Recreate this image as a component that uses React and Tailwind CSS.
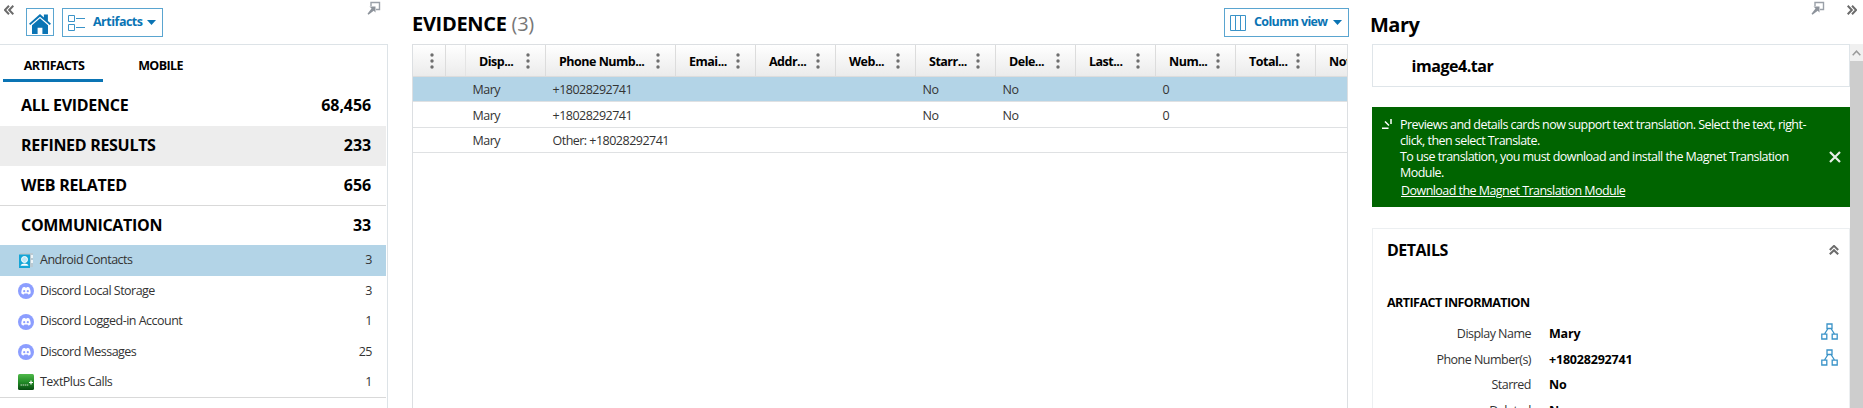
const label = "text-[12.5px] text-[#333] tracking-[-0.52px]";

function Popout() {
  return (
    <svg width="14" height="14" viewBox="0 0 14 14" fill="none">
      <path d="M4 5V1.500h8.500v7H9" stroke="#9aa0a8" strokeWidth="1.400" />
      <path d="M2.500 5.500h6v6L6.700 9.700 1.500 13.800.5 12.800 4.500 7.500z" fill="#8d939b" />
    </svg>
  );
}

function Chevrons({ className }) {
  return (
    <svg className={className} width="10" height="10" viewBox="0 0 10 10" fill="none" stroke="#6b6b6b" strokeWidth="2">
      <path d="M5 .8.9 5 5 9.2M9.3.8 5.2 5l4.1 4.2" />
    </svg>
  );
}

function Home() {
  return (
    <svg width="22" height="20" viewBox="0 0 22 20" fill="#0a74b4">
      <path d="M11 0 0 9.7l1.3 1.4L11 2.7l9.7 8.4L22 9.7l-3.1-2.8V0.6h-4v2.8z" />
      <path d="M11 4.2 3 11.2V20h5.6v-6.2h4.8V20H19v-8.8z" />
    </svg>
  );
}

function ListIcon() {
  return (
    <svg width="17" height="17" viewBox="0 0 17 17" fill="none" stroke="#3a93c8">
      <path d="M.5 1.500h6v6h-6zM.5 10.500h6v6h-6zM8 4.500h9M8 13.500h9" />
    </svg>
  );
}

function ColumnsIcon() {
  return (
    <svg width="16" height="16" viewBox="0 0 16 16" fill="none" stroke="#3a93c8">
      <path d="M.5.5h15v15H.5zM5.5 0v16M10.5 0v16" />
    </svg>
  );
}

function Caret() {
  return (
    <svg width="9" height="5" viewBox="0 0 9 5">
      <path d="M0 0h9L4.5 5z" fill="#0a74b4" />
    </svg>
  );
}

function ContactIcon() {
  return (
    <svg className="ml-px" width="15" height="15" viewBox="0 0 15 15">
      <path d="M1 0h13v14H1z" fill="#b9c9d2" />
      <path d="M12 2h2v3h-2zM12 7h2v3h-2z" fill="#eef4f7" />
      <path d="M0 1.5h11V15H0z" fill="#14a5d6" />
      <circle cx="5.5" cy="6.5" r="3" fill="#bfe6f4" stroke="#fff" />
      <path d="M1.500 12.700c1-2.800 7-2.800 8 0z" fill="#fff" />
    </svg>
  );
}

function DiscordIcon() {
  return (
    <svg width="16" height="16" viewBox="0 0 16 16">
      <circle cx="8" cy="8" r="8" fill="#8c9eff" />
      <path d="M4.7 4.6c1-.5 1.6-.6 2.1-.6l.3.5h1.8l.3-.5c.5 0 1.200.1 2.100.6.9 1.500 1.400 3.500 1.400 5.600-.8.8-1.700 1.200-2.500 1.300l-.6-.9H6.400l-.6.9c-.8-.1-1.700-.5-2.500-1.300 0-2.100.5-4.100 1.400-5.600z" fill="#fff" />
      <circle cx="6.200" cy="8.200" r="1.100" fill="#8c9eff" />
      <circle cx="9.800" cy="8.200" r="1.100" fill="#8c9eff" />
    </svg>
  );
}

function TextPlusIcon() {
  return (
    <svg width="16" height="16" viewBox="0 0 16 16">
      <defs>
        <linearGradient id="tp" x1="0" y1="0" x2="0" y2="1">
          <stop offset="0" stopColor="#4fb94a" />
          <stop offset=".5" stopColor="#238c28" />
          <stop offset="1" stopColor="#064a10" />
        </linearGradient>
      </defs>
      <rect width="16" height="16" rx="1.500" fill="url(#tp)" />
      <path d="M2.500 11h8" stroke="#6fa870" strokeWidth="2" strokeDasharray="1.500 .6" />
      <path d="M13 6.500v4M11 8.500h4" stroke="#fff" strokeWidth="1.200" />
    </svg>
  );
}

function NodesIcon() {
  return (
    <svg width="17" height="17" viewBox="0 0 17 17" fill="none" stroke="#3a93c8" strokeWidth="1.300">
      <path d="M6 1h5v4.500H6zM.8 11.200h5v4.800h-5zM11.200 11.200h5v4.800h-5zM7 5.500 3.500 11M10 5.500l3.500 5.500" />
    </svg>
  );
}

function Dots() {
  return (
    <svg width="4" height="16" viewBox="0 0 4 16" fill="#6e6e6e">
      <circle cx="2" cy="2" r="1.700" />
      <circle cx="2" cy="8" r="1.700" />
      <circle cx="2" cy="14" r="1.700" />
    </svg>
  );
}

function Category({ name, count, className = "h-10" }) {
  return (
    <div className={`flex w-[386px] items-center justify-between pb-[2px] pl-[21px] pr-[15px] text-[16px] font-bold text-black ${className}`}>
      <span className="tracking-[-0.3px]">{name}</span>
      <span className="tracking-[-0.1px]">{count}</span>
    </div>
  );
}

const artifacts = [
  { icon: <ContactIcon />, name: "Android Contacts", count: 3, row: "h-[31px] bg-[#b3d4e7]" },
  { icon: <DiscordIcon />, name: "Discord Local Storage", count: 3, row: "h-[30px]" },
  { icon: <DiscordIcon />, name: "Discord Logged-in Account", count: 1, row: "h-[31px]" },
  { icon: <DiscordIcon />, name: "Discord Messages", count: 25, row: "h-[30px]" },
  { icon: <TextPlusIcon />, name: "TextPlus Calls", count: 1, row: "h-[30px]" },
];

function Sidebar() {
  return (
    <aside className="flex w-[412px] shrink-0 flex-col">
      <div className="flex h-11 w-[388px] items-start">
        <Chevrons className="ml-1 mt-[5px]" />
        <div className="ml-3 mt-2 flex h-7 w-7 items-center justify-center border border-[#5aa5d0] pt-[3px]">
          <Home />
        </div>
        <button className="ml-2 mt-2 flex h-[29px] w-[101px] items-center border border-[#5aa5d0] pl-[5px]">
          <ListIcon />
          <span className="-mt-px ml-2 w-[48px] text-left text-[12.5px] font-bold tracking-[-0.5px] text-[#0a74b4]">Artifacts</span>
          <span className="ml-[6px] flex"><Caret /></span>
        </button>
        <span className="ml-auto mr-[7px] mt-[1px]"><Popout /></span>
      </div>
      <div className="flex w-[388px] flex-1 flex-col border-r border-t border-[#dde3e7]">
        <div className="flex h-[41px] pl-[3px]">
          <div className="flex h-[37px] w-[100px] items-center justify-center border-b-[3px] border-[#0a74b4] pl-0.5 pt-[8px] text-[12.5px] font-bold tracking-[-0.6px] text-black">ARTIFACTS</div>
          <div className="flex h-[37px] w-[115px] items-center justify-center pt-[5px] text-[12.5px] font-bold tracking-[-0.6px] text-black">MOBILE</div>
        </div>
        <Category name="ALL EVIDENCE" count="68,456" />
        <Category name="REFINED RESULTS" count="233" className="h-10 bg-[#ededed]" />
        <Category name="WEB RELATED" count="656" className="h-10 border-b border-[#d9d9d9]" />
        <Category name="COMMUNICATION" count="33" className="h-[39px]" />
        {artifacts.map((a) => (
          <div key={a.name} className={`flex w-[386px] items-center pl-[18px] pr-[14px] ${a.row}`}>
            <span className="flex w-[22px]">{a.icon}</span>
            <span className={label}>{a.name}</span>
            <span className={`ml-auto ${label}`}>{a.count}</span>
          </div>
        ))}
        <div className="w-[386px] border-t border-[#d9d9d9]" />
      </div>
    </aside>
  );
}

const columns = ["Disp...", "Phone Numb...", "Emai...", "Addr...", "Web...", "Starr...", "Dele...", "Last...", "Num...", "Total...", "Notes..."];
const gridCols = "grid grid-cols-[33px_20px_80px_130px_80px_80px_80px_80px_80px_80px_80px_80px_80px]";
const rows = [
  { cells: ["Mary", "+18028292741", "", "", "", "No", "No", "", "0"], row: "h-[25px] bg-[#b3d4e7]" },
  { cells: ["Mary", "+18028292741", "", "", "", "No", "No", "", "0"], row: "h-[26px] pt-px" },
  { cells: ["Mary", "Other: +18028292741"], row: "h-[25px] pt-px" },
];

function Evidence() {
  return (
    <main className="flex w-[938px] shrink-0 flex-col">
      <div className="flex h-11 justify-between">
        <h1 className="mt-[10px] text-[20px] leading-[28px] font-bold tracking-[-0.3px] text-black">
          EVIDENCE <span className="font-normal text-[#777]">(3)</span>
        </h1>
        <button className="mr-px mt-2 flex h-[29px] w-[125px] items-center border border-[#5aa5d0] pl-[5px]">
          <ColumnsIcon />
          <span className="-mt-px ml-2 w-[73px] whitespace-nowrap text-left text-[12.5px] font-bold tracking-[-0.65px] text-[#0a74b4]">Column view</span>
          <span className="ml-[6px] flex"><Caret /></span>
        </button>
      </div>
      <div className="w-[936px] flex-1 overflow-hidden border border-b-0 border-[#dcdfe2]">
        <div className={`${gridCols} h-8 border-b border-[#dcdcdc] bg-linear-to-b from-white to-[#ebebeb]`}>
          <div className="flex items-center justify-end border-r border-[#dcdcdc] pr-[11px]"><Dots /></div>
          <div className="border-r border-[#e4e4e4]" />
          {columns.map((c) => (
            <div key={c} className="flex items-center justify-between border-r border-[#dcdcdc] pl-[13px] pr-[15px] text-[12.5px] font-bold tracking-[-0.5px] text-black">
              <span className="pt-[3px]">{c}</span>
              <Dots />
            </div>
          ))}
        </div>
        {rows.map((r, i) => (
          <div key={i} className={`${gridCols} ${r.row} items-center border-b border-[#dfe1e3]`}>
            <span />
            <span />
            {r.cells.map((c, j) => (
              <span key={j} className={`whitespace-nowrap pl-[6.5px] pt-[2px] ${label}`}>{c}</span>
            ))}
          </div>
        ))}
      </div>
    </main>
  );
}

const details = [
  { name: "Display Name", value: "Mary", linked: true },
  { name: "Phone Number(s)", value: "+18028292741", linked: true },
  { name: "Starred", value: "No" },
  { name: "Deleted", value: "No" },
];

function Details() {
  return (
    <section className="flex flex-1 flex-col">
      <div className="flex h-11 items-start pl-5">
        <h2 className="mt-[11px] text-[20px] leading-[28px] font-bold tracking-[-0.5px] text-black">Mary</h2>
        <span className="ml-auto mt-[1px]"><Popout /></span>
        <Chevrons className="ml-[22px] mr-[6px] mt-[5px] rotate-180" />
      </div>
      <div className="flex flex-1">
        <div className="flex h-[364px] flex-1 flex-col overflow-hidden pl-[22px]">
          <div className="flex h-[43px] shrink-0 items-center border border-[#dfe5e9] pl-[38.5px] pt-px text-[16px] font-bold tracking-[-0.45px] text-black">image4.tar</div>
          <div className="mt-5 flex h-[100px] shrink-0 bg-[#006400] pl-[10px] pt-[10px] text-[12.5px] leading-4 text-white">
            <svg className="mt-[2px] shrink-0" width="11" height="11" viewBox="0 0 11 11" stroke="#fff" strokeWidth="1.500">
              <path d="M9 0v5M3 2.500l4 4M0 9.200h6.500" />
            </svg>
            <div className="ml-[7px] w-[429px] whitespace-nowrap tracking-[-0.55px]">
              <p>Previews and details cards now support text translation. Select the text, right-<br />click, then select Translate.</p>
              <p>To use translation, you must download and install the Magnet Translation<br />Module.</p>
              <p className="pl-[1px] pt-[2px] underline">Download the Magnet Translation Module</p>
            </div>
            <svg className="mt-[34px]" width="12" height="12" viewBox="0 0 12 12" stroke="#e6efe6" strokeWidth="2.200">
              <path d="m1 1 10 10M11 1 1 11" />
            </svg>
          </div>
          <div className="mt-[21px] flex h-[200px] shrink-0 flex-col border border-[#eceff1] pl-[14px]">
            <div className="mt-[9px] flex h-6 items-center justify-between pr-[10px]">
              <h3 className="text-[16px] font-bold tracking-[-0.5px] text-black">DETAILS</h3>
              <Chevrons className="rotate-90" />
            </div>
            <h4 className="mt-[31px] text-[12.5px] leading-[20px] font-bold tracking-[-0.54px] text-black">ARTIFACT INFORMATION</h4>
            <div className="mt-[9px] flex flex-col">
              {details.map((d) => (
                <div key={d.name} className="flex h-[25.500px] items-center pr-[11px]">
                  <span className={`w-[144px] text-right ${label}`}>{d.name}</span>
                  <span className="ml-[18px] text-[12.5px] font-bold tracking-[-0.2px] text-black">{d.value}</span>
                  {d.linked && <span className="-mt-[6px] ml-auto flex"><NodesIcon /></span>}
                </div>
              ))}
            </div>
          </div>
        </div>
        <div className="w-[13px] bg-[#cdcdcd]">
          <div className="flex h-[17px] items-center justify-center bg-[#f0f0f0]">
            <svg width="9" height="6" viewBox="0 0 9 6" fill="none" stroke="#9a9a9a" strokeWidth="1.500">
              <path d="m.7 5.200 3.800-4 3.800 4" />
            </svg>
          </div>
        </div>
      </div>
    </section>
  );
}

export default function App() {
  return (
    <div className="flex h-[408px] w-[1863px] overflow-hidden bg-white font-['Open_Sans','Noto_Sans',sans-serif]">
      <Sidebar />
      <Evidence />
      <Details />
    </div>
  );
}
